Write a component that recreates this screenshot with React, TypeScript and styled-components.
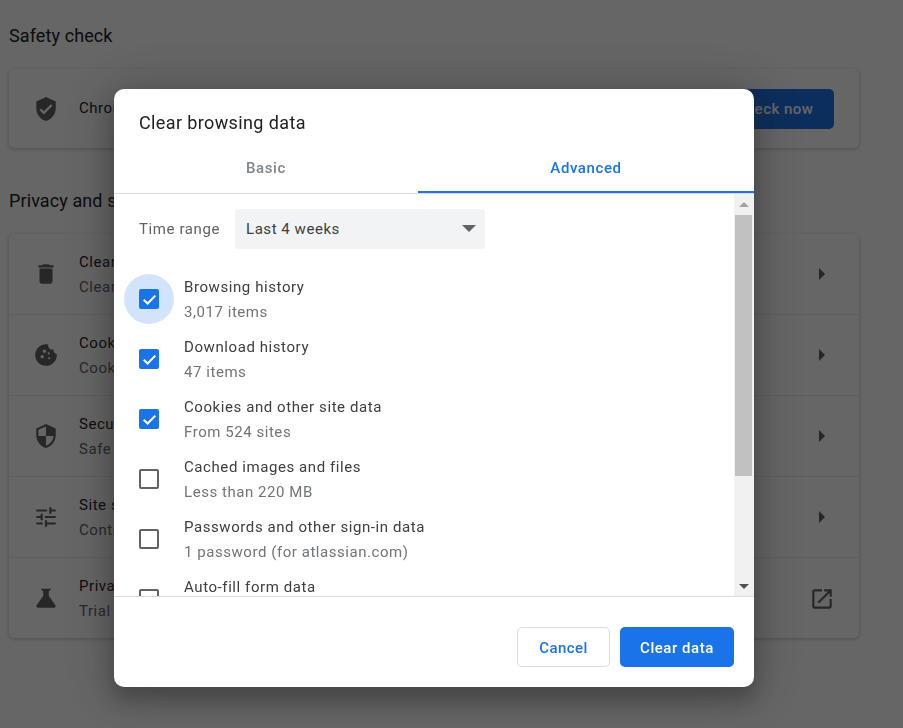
import React from 'react';
import styled, { createGlobalStyle } from 'styled-components';

const GlobalStyle = createGlobalStyle`
  html, body {
    margin: 0;
    height: 100%;
    overflow: hidden;
    background: #fff;
    font-family: Roboto, 'Liberation Sans', sans-serif;
    color: #202124;
  }
  * { box-sizing: border-box; }
`;

const settingsRows = [
  { title: 'Clear browsing data', sub: 'Clear history, cookies, cache, and more', icon: 'M6 19c0 1.1.9 2 2 2h8c1.1 0 2-.9 2-2V7H6v12zM19 4h-3.5l-1-1h-5l-1 1H5v2h14V4z', external: false },
  { title: 'Cookies and other site data', sub: 'Cookies are allowed', icon: 'M21.95 10.99c-1.79-.03-3.7-1.95-2.68-4.22-2.97 1-5.78-1.59-5.19-4.56C7.11.74 2 6.41 2 12c0 5.52 4.48 10 10 10 5.89 0 10.54-5.08 9.95-11.01zM8.5 15c-.83 0-1.5-.67-1.5-1.5S7.67 12 8.5 12s1.5.67 1.5 1.5S9.33 15 8.5 15zm2-5C9.67 10 9 9.33 9 8.5S9.67 7 10.5 7s1.5.67 1.5 1.5-.67 1.5-1.5 1.5zm4.5 6c-.55 0-1-.45-1-1s.45-1 1-1 1 .45 1 1-.45 1-1 1zM14.5 9.5a1 1 0 1 0 0 2 1 1 0 0 0 0-2z', external: false },
  { title: 'Security', sub: 'Safe Browsing and other security settings', icon: 'M12 1 3 5v6c0 5.55 3.84 10.74 9 12 5.16-1.26 9-6.45 9-12V5l-9-4zm0 10.99h7c-.53 4.12-3.28 7.79-7 8.94V12H5V6.3l7-3.11v8.8z', external: false },
  { title: 'Site settings', sub: 'Controls what information sites can use', icon: 'M3 17v2h6v-2H3zM3 5v2h10V5H3zm10 16v-2h8v-2h-8v-2h-2v6h2zM7 9v2H3v2h4v2h2V9H7zm14 4v-2H11v2h10zm-6-4h2V7h4V5h-4V3h-2v6z', external: false },
  { title: 'Privacy Sandbox', sub: 'Trial features are on', icon: 'M7 3.4h10l-2.5 2.6V10l6.2 8.6c.6.9 0 2.3-1.2 2.3H4.5c-1.2 0-1.8-1.4-1.2-2.3L9.5 10V6z', external: true },
];

const dataTypes = [
  { title: 'Browsing history', sub: '3,017 items', checked: true, focused: true },
  { title: 'Download history', sub: '47 items', checked: true, focused: false },
  { title: 'Cookies and other site data', sub: 'From 524 sites', checked: true, focused: false },
  { title: 'Cached images and files', sub: 'Less than 220 MB', checked: false, focused: false },
  { title: 'Passwords and other sign-in data', sub: '1 password (for atlassian.com)', checked: false, focused: false },
  { title: 'Auto-fill form data', sub: '', checked: false, focused: false },
];

function GlyphIcon({ d, size = 26 }: { d: string; size?: number }) {
  return (
    <svg width={size} height={size} viewBox="0 0 24 24" fill="#5f6368" fillRule="evenodd">
      <path d={d} />
    </svg>
  );
}

export default function App() {
  return (
    <>
      <GlobalStyle />
      <Page>
        <SectionTitle>Safety check</SectionTitle>
        <Card>
          <SafetyRow>
            <IconSlot>
              <GlyphIcon d="M12 1 3 5v6c0 5.55 3.84 10.74 9 12 5.16-1.26 9-6.45 9-12V5l-9-4zm-2 16-4-4 1.41-1.41L10 14.17l6.59-6.59L18 9l-8 8z" />
            </IconSlot>
            <RowTitle>Chrome found some safety recommendations for your review</RowTitle>
            <CheckNow>Check now</CheckNow>
          </SafetyRow>
        </Card>
        <SectionTitle>Privacy and security</SectionTitle>
        <Card>
          {settingsRows.map((row) => (
            <SettingsRow key={row.title}>
              <IconSlot>
                <GlyphIcon d={row.icon} />
              </IconSlot>
              <RowText>
                <RowTitle>{row.title}</RowTitle>
                <RowSub>{row.sub}</RowSub>
              </RowText>
              {row.external ? (
                <ExternalIcon>
                  <GlyphIcon d="M19 19H5V5h7V3H5a2 2 0 0 0-2 2v14a2 2 0 0 0 2 2h14c1.1 0 2-.9 2-2v-7h-2v7zM14 3v2h3.59l-9.83 9.83 1.41 1.41L19 6.41V10h2V3h-7z" />
                </ExternalIcon>
              ) : (
                <Chevron />
              )}
            </SettingsRow>
          ))}
        </Card>
      </Page>

      <Scrim>
        <Dialog>
          <DialogTitle>Clear browsing data</DialogTitle>
          <Tabs>
            <Tab>Basic</Tab>
            <Tab $active>Advanced</Tab>
          </Tabs>
          <DialogBody>
            <ScrollArea>
              <TimeRow>
                <TimeLabel>Time range</TimeLabel>
                <Select>
                  Last 4 weeks
                  <SelectCaret />
                </Select>
              </TimeRow>
              {dataTypes.map((item) => (
                <DataRow key={item.title}>
                  <CheckSlot $focused={item.focused}>
                    <Checkbox $checked={item.checked}>
                      {item.checked && (
                        <svg width="15" height="15" viewBox="0 0 14 14" fill="none" stroke="#fff" strokeWidth="1.9">
                          <path d="M1.6 7.2 5.3 10.8 12.4 3.4" />
                        </svg>
                      )}
                    </Checkbox>
                  </CheckSlot>
                  <DataText>
                    <DataTitle>{item.title}</DataTitle>
                    <DataSub>{item.sub}</DataSub>
                  </DataText>
                </DataRow>
              ))}
            </ScrollArea>
            <Scrollbar>
              <ArrowButton>
                <ArrowUp />
              </ArrowButton>
              <ThumbTrack>
                <Thumb />
              </ThumbTrack>
              <ArrowButton>
                <ArrowDown />
              </ArrowButton>
            </Scrollbar>
          </DialogBody>
          <Footer>
            <CancelButton>Cancel</CancelButton>
            <ClearButton>Clear data</ClearButton>
          </Footer>
        </Dialog>
      </Scrim>
    </>
  );
}

const Page = styled.div`
  width: 850px;
  margin-left: 9px;
  padding-top: 24px;
`;

const SectionTitle = styled.h2`
  margin: 0 0 21px;
  height: 24px;
  font-size: 18px;
  line-height: 24px;
  font-weight: 400;
  letter-spacing: 0.1px;
  color: #202124;
`;

const Card = styled.div`
  background: #fff;
  border-radius: 5px;
  margin-bottom: 41px;
  box-shadow: 0 1px 3px 1px rgba(60, 64, 67, 0.2);
`;

const SafetyRow = styled.div`
  height: 79px;
  display: flex;
  align-items: center;
  padding: 0 25px 0 24px;
  white-space: nowrap;
`;

const SettingsRow = styled.div`
  height: 81px;
  display: flex;
  align-items: center;
  padding: 0 25px 0 24px;
  border-top: 1px solid #e8eaed;
  &:first-child {
    height: 80px;
    border-top: 0;
  }
`;

const IconSlot = styled.div`
  width: 46px;
  flex: none;
  display: flex;
`;

const RowText = styled.div`
  flex: 1;
  margin-top: 2px;
`;

const RowTitle = styled.div`
  flex: 1;
  font-size: 15px;
  line-height: 25px;
  letter-spacing: 0.55px;
  color: #202124;
`;

const RowSub = styled.div`
  font-size: 15px;
  line-height: 25px;
  letter-spacing: 0.55px;
  color: #5f6368;
`;

const ExternalIcon = styled.span`
  display: flex;
  margin: 2px -1px 0 0;
`;

const CheckNow = styled.div`
  width: 119px;
  height: 40px;
  display: flex;
  align-items: center;
  justify-content: center;
  border-radius: 5px;
  background: #1a73e8;
  color: #fff;
  font-size: 15px;
  font-weight: 500;
  letter-spacing: 0.5px;
`;

const Chevron = styled.div`
  width: 0;
  height: 0;
  margin-right: 9px;
  border-left: 6px solid #5f6368;
  border-top: 6px solid transparent;
  border-bottom: 6px solid transparent;
`;

const Scrim = styled.div`
  position: fixed;
  inset: 0;
  padding: 89px 149px 41px 114px;
  background: rgba(0, 0, 0, 0.6);
`;

const Dialog = styled.div`
  width: 640px;
  height: 598px;
  display: flex;
  flex-direction: column;
  background: #fff;
  border-radius: 10px;
  overflow: hidden;
  box-shadow: 0 12px 18px 2px rgba(32, 33, 36, 0.3), 0 4px 50px 6px rgba(32, 33, 36, 0.3);
`;

const DialogTitle = styled.div`
  flex: none;
  height: 59px;
  padding: 22px 25px 0;
  font-size: 18px;
  line-height: 24px;
  letter-spacing: 0.38px;
  color: #202124;
`;

const Tabs = styled.div`
  flex: none;
  height: 46px;
  display: grid;
  grid-template-columns: 304px 336px;
  border-bottom: 1px solid #dadce0;
`;

const Tab = styled.div<{ $active?: boolean }>`
  display: flex;
  align-items: center;
  justify-content: center;
  padding-bottom: 4px;
  font-size: 15px;
  font-weight: 500;
  letter-spacing: 0.6px;
  color: ${({ $active }) => ($active ? '#1a73e8' : '#80868b')};
  border-bottom: 2px solid ${({ $active }) => ($active ? '#1a73e8' : 'transparent')};
`;

const DialogBody = styled.div`
  flex: none;
  height: 403px;
  display: flex;
  border-bottom: 1px solid #dadce0;
`;

const ScrollArea = styled.div`
  flex: 1;
  overflow: hidden;
  padding-top: 15px;
`;

const TimeRow = styled.div`
  display: flex;
  align-items: center;
  height: 40px;
  margin-bottom: 20px;
  padding-left: 25px;
`;

const TimeLabel = styled.div`
  width: 96px;
  font-size: 15px;
  letter-spacing: 0.6px;
  color: #5f6368;
`;

const Select = styled.div`
  position: relative;
  width: 250px;
  height: 40px;
  display: flex;
  align-items: center;
  padding-left: 11px;
  border-radius: 4px;
  background: #f1f3f4;
  font-size: 15px;
  letter-spacing: 0.55px;
  color: #3c4043;
`;

const SelectCaret = styled.span`
  position: absolute;
  right: 9px;
  top: 16px;
  width: 0;
  height: 0;
  border-left: 7px solid transparent;
  border-right: 7px solid transparent;
  border-top: 7px solid #5f6368;
`;

const DataRow = styled.div`
  display: flex;
  align-items: center;
  height: 60px;
  padding-left: 10px;
`;

const CheckSlot = styled.div<{ $focused: boolean }>`
  flex: none;
  width: 50px;
  height: 50px;
  margin-right: 10px;
  display: flex;
  align-items: center;
  justify-content: center;
  border-radius: 50%;
  background: ${({ $focused }) => ($focused ? '#d2e3fc' : 'transparent')};
`;

const Checkbox = styled.div<{ $checked: boolean }>`
  width: 20px;
  height: 20px;
  display: flex;
  align-items: center;
  justify-content: center;
  border-radius: 2px;
  background: ${({ $checked }) => ($checked ? '#1a73e8' : '#fff')};
  border: ${({ $checked }) => ($checked ? '0' : '2px solid #5f6368')};
`;

const DataText = styled.div`
  margin-top: 2px;
`;

const DataTitle = styled.div`
  font-size: 15px;
  line-height: 25px;
  letter-spacing: 0.58px;
  color: #3c4043;
`;

const DataSub = styled.div`
  min-height: 25px;
  font-size: 15px;
  line-height: 25px;
  letter-spacing: 0.55px;
  color: #70757a;
`;

const Scrollbar = styled.div`
  flex: none;
  width: 20px;
  display: flex;
  flex-direction: column;
  background: #f1f1f1;
`;

const ArrowButton = styled.div`
  flex: none;
  height: 20px;
  display: flex;
  align-items: center;
  justify-content: center;
`;

const ArrowUp = styled.span`
  width: 0;
  height: 0;
  border-left: 5px solid transparent;
  border-right: 5px solid transparent;
  border-bottom: 5px solid #a3a3a3;
`;

const ArrowDown = styled.span`
  width: 0;
  height: 0;
  border-left: 5px solid transparent;
  border-right: 5px solid transparent;
  border-top: 5px solid #505050;
`;

const ThumbTrack = styled.div`
  flex: 1;
  padding: 1px 2px 0 1px;
`;

const Thumb = styled.div`
  height: 261px;
  background: #c1c1c1;
`;

const Footer = styled.div`
  flex: 1;
  display: flex;
  justify-content: flex-end;
  gap: 10px;
  padding: 30px 20px 0;
`;

const CancelButton = styled.div`
  width: 93px;
  height: 40px;
  display: flex;
  align-items: center;
  justify-content: center;
  padding-top: 1px;
  border: 1px solid #dadce0;
  border-radius: 5px;
  background: #fff;
  color: #1a73e8;
  font-size: 15px;
  font-weight: 500;
  letter-spacing: 0.45px;
`;

const ClearButton = styled.div`
  width: 114px;
  height: 40px;
  display: flex;
  align-items: center;
  justify-content: center;
  padding-top: 1px;
  border-radius: 5px;
  background: #1a73e8;
  color: #fff;
  font-size: 15px;
  font-weight: 500;
  letter-spacing: 0.55px;
`;
